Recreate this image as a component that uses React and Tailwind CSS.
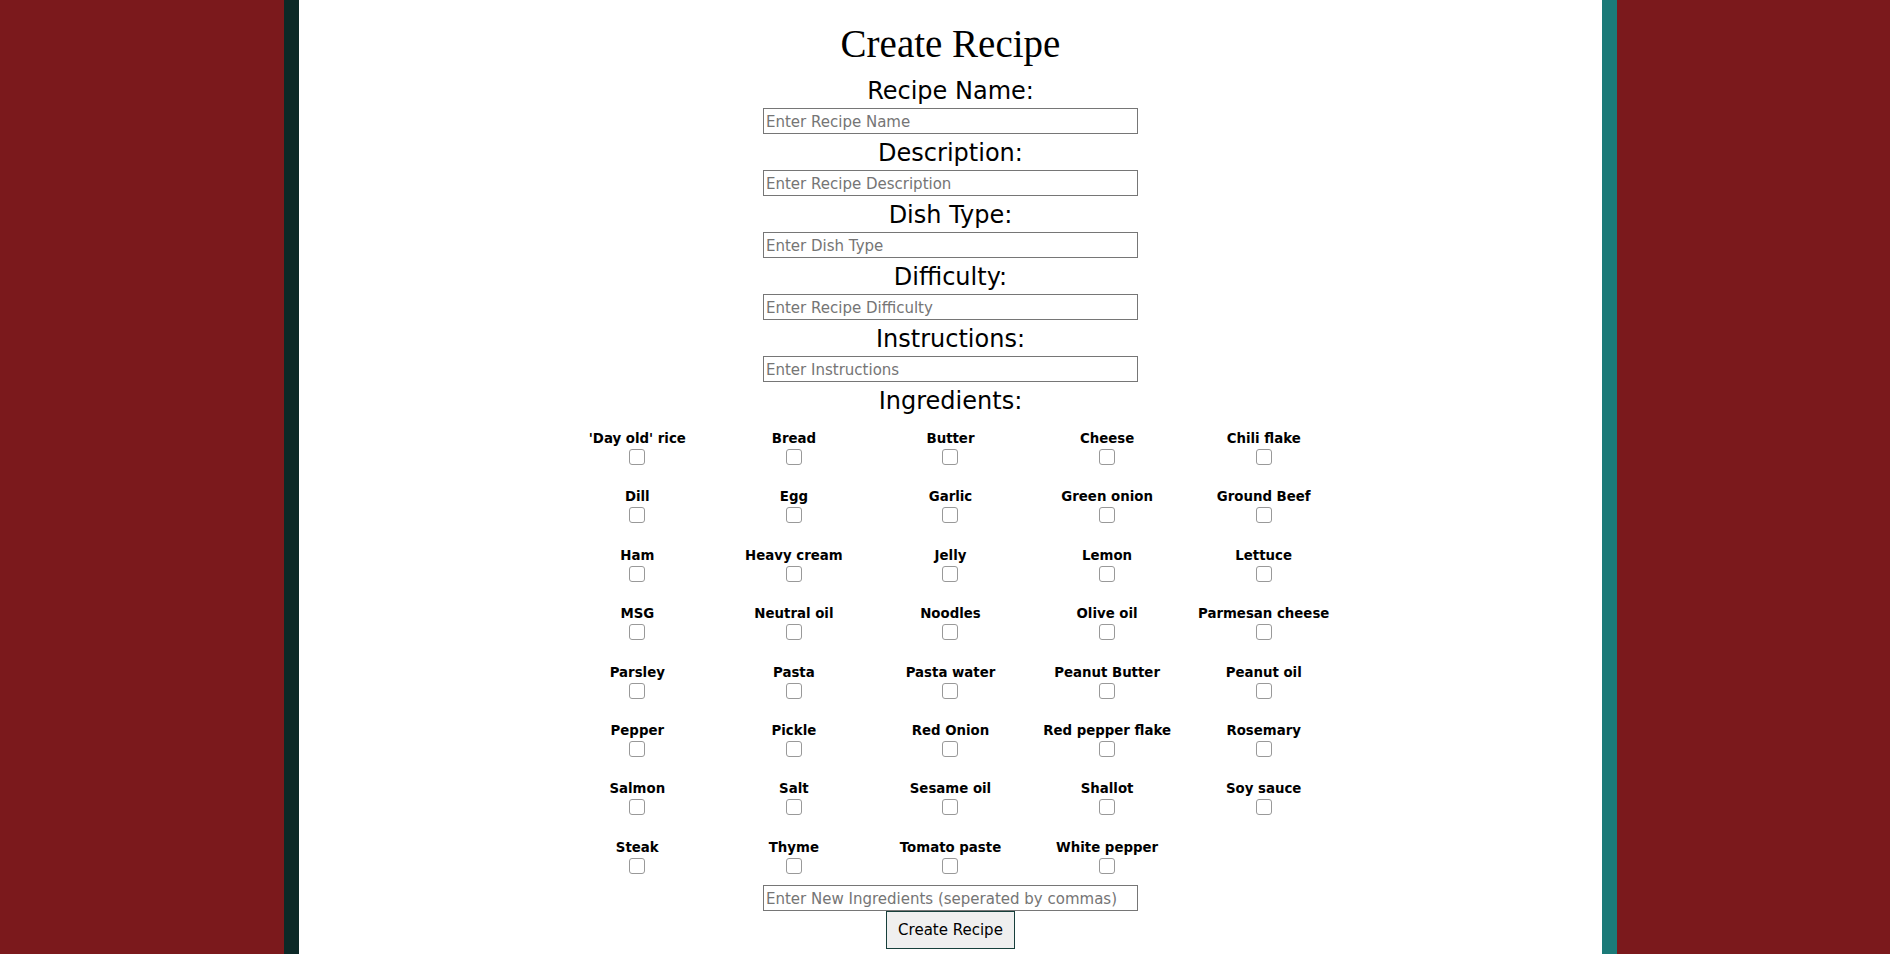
import React from "react";

const ingredients = [
  "'Day old' rice", "Bread", "Butter", "Cheese", "Chili flake",
  "Dill", "Egg", "Garlic", "Green onion", "Ground Beef",
  "Ham", "Heavy cream", "Jelly", "Lemon", "Lettuce",
  "MSG", "Neutral oil", "Noodles", "Olive oil", "Parmesan cheese",
  "Parsley", "Pasta", "Pasta water", "Peanut Butter", "Peanut oil",
  "Pepper", "Pickle", "Red Onion", "Red pepper flake", "Rosemary",
  "Salmon", "Salt", "Sesame oil", "Shallot", "Soy sauce",
  "Steak", "Thyme", "Tomato paste", "White pepper",
];

const fields = [
  ["Recipe Name:", "Enter Recipe Name"],
  ["Description:", "Enter Recipe Description"],
  ["Dish Type:", "Enter Dish Type"],
  ["Difficulty:", "Enter Recipe Difficulty"],
  ["Instructions:", "Enter Instructions"],
];

const inputCls =
  "block w-[375px] h-[26px] border border-[#767676] bg-white px-[2px] pt-[2px] pb-0 text-[15px] leading-[20px] text-black placeholder:text-[#757575] outline-none [font-family:'DejaVu_Sans',sans-serif]";

export default function App() {
  return (
    <div className="flex h-screen overflow-hidden bg-[#7b191c] [font-family:'DejaVu_Sans',sans-serif]">
      <div className="w-[284px] shrink-0" />
      <main className="w-[1333px] shrink-0 bg-white border-l-[15px] border-l-[#0c2927] border-r-[15px] border-r-[#1b7a78] flex flex-col items-center pt-[22px] text-black">
        <h1 className="text-[39px] leading-[44px] [font-family:'Liberation_Serif',serif] font-normal">
          Create Recipe
        </h1>
        <form className="flex flex-col items-center" onSubmit={(e) => e.preventDefault()}>
          {fields.map(([label, ph], i) => (
            <React.Fragment key={label}>
              <label className={`text-[24px] leading-[28px] ${i === 0 ? "mt-[11px]" : "mt-[5px]"}`}>
                {label}
              </label>
              <input type="text" placeholder={ph} className={`${inputCls} mt-[3px]`} />
            </React.Fragment>
          ))}
          <label className="text-[24px] leading-[28px] mt-[5px]">Ingredients:</label>
          <div className="grid grid-cols-5 w-[783px] mt-[16px] gap-y-[24.4px]">
            {ingredients.map((name) => (
              <div key={name} className="flex flex-col items-center">
                <span className="text-[13.33px] leading-[16px] font-bold whitespace-nowrap">{name}</span>
                <input
                  type="checkbox"
                  className="appearance-none mt-[2px] w-[16px] h-[16px] border border-[#999999] rounded-[3px] bg-white"
                />
              </div>
            ))}
          </div>
          <input
            type="text"
            placeholder="Enter New Ingredients (seperated by commas)"
            className={`${inputCls} mt-[11px]`}
          />
          <button
            type="submit"
            className="w-[129px] h-[38px] bg-[#efefef] border border-[#173f3b] text-[15px] leading-[18px] text-black [font-family:'DejaVu_Sans',sans-serif]"
          >
            Create Recipe
          </button>
        </form>
      </main>
      <div className="flex-1" />
    </div>
  );
}
